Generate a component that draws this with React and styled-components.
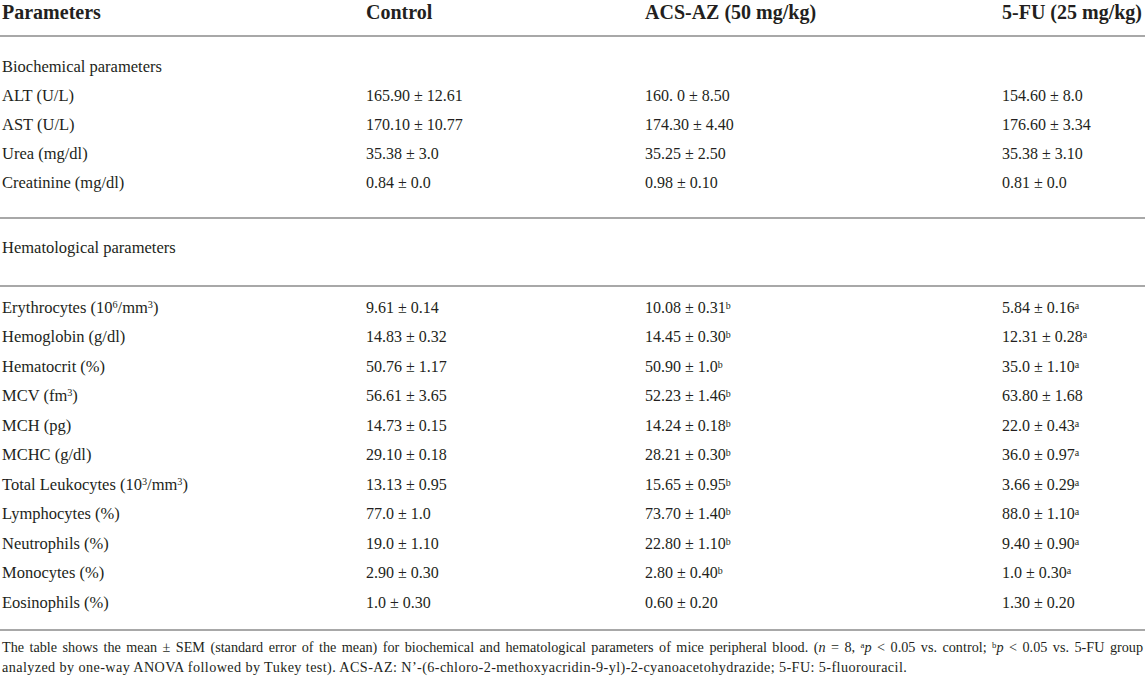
import React from "react";
import styled, { createGlobalStyle } from "styled-components";

const GlobalStyle = createGlobalStyle`
  html, body {
    margin: 0;
    padding: 0;
    background: #ffffff;
  }
  body {
    font-family: "Liberation Serif", "Times New Roman", serif;
    color: #231f20;
  }
`;

const Wrap = styled.div`
  width: 1145px;
  background: white;
`;

const Grid = styled.div`
  display: grid;
  grid-template-columns: 364px 279px 357px 1fr;
`;

const HeadRow = styled(Grid)`
  padding-bottom: 11px;
  border-bottom: 2px solid #a8a8a8;
`;

const HeadCell = styled.div`
  padding-left: 2px;
  font-size: 20px;
  font-weight: bold;
  line-height: 24px;
  white-space: nowrap;
`;

const Section = styled.div`
  padding-top: ${(p) => p.$top}px;
  padding-bottom: ${(p) => p.$bottom}px;
  border-bottom: ${(p) => (p.$line ? "2px solid #a8a8a8" : "none")};
`;

const Row = styled(Grid)`
  height: ${(p) => p.$h || 29}px;
  align-items: center;
`;

const Cell = styled.div`
  padding-left: 2px;
  font-size: ${(p) => (p.$label ? "16.5px" : "16px")};
  white-space: nowrap;
`;

const Label = styled.div`
  padding-left: 2px;
  font-size: 16.5px;
  height: 29px;
  line-height: 29px;
`;

const Sup = styled.sup`
  font-size: 0.62em;
  line-height: 0;
  vertical-align: 0.45em;
`;

const Note = styled.div`
  padding: 6px 2px 0;
  font-size: 14.2px;
  line-height: 20px;
`;

const NoteLine = styled.div`
  text-align: justify;
  text-align-last: ${(p) => (p.$last ? "left" : "justify")};
  letter-spacing: ${(p) => (p.$last ? "0.4px" : "0")};
  white-space: nowrap;
`;

const biochem = [
  ["ALT (U/L)", ["165.90 ± 12.61"], ["160. 0 ± 8.50"], ["154.60 ± 8.0"]],
  ["AST (U/L)", ["170.10 ± 10.77"], ["174.30 ± 4.40"], ["176.60 ± 3.34"]],
  ["Urea (mg/dl)", ["35.38 ± 3.0"], ["35.25 ± 2.50"], ["35.38 ± 3.10"]],
  ["Creatinine (mg/dl)", ["0.84 ± 0.0"], ["0.98 ± 0.10"], ["0.81 ± 0.0"]],
];

const hemato = [
  [<>Erythrocytes (10<Sup>6</Sup>/mm<Sup>3</Sup>)</>, ["9.61 ± 0.14"], ["10.08 ± 0.31", "b"], ["5.84 ± 0.16", "a"]],
  ["Hemoglobin (g/dl)", ["14.83 ± 0.32"], ["14.45 ± 0.30", "b"], ["12.31 ± 0.28", "a"]],
  ["Hematocrit (%)", ["50.76 ± 1.17"], ["50.90 ± 1.0", "b"], ["35.0 ± 1.10", "a"]],
  [<>MCV (fm<Sup>3</Sup>)</>, ["56.61 ± 3.65"], ["52.23 ± 1.46", "b"], ["63.80 ± 1.68"]],
  ["MCH (pg)", ["14.73 ± 0.15"], ["14.24 ± 0.18", "b"], ["22.0 ± 0.43", "a"]],
  ["MCHC (g/dl)", ["29.10 ± 0.18"], ["28.21 ± 0.30", "b"], ["36.0 ± 0.97", "a"]],
  [<>Total Leukocytes (10<Sup>3</Sup>/mm<Sup>3</Sup>)</>, ["13.13 ± 0.95"], ["15.65 ± 0.95", "b"], ["3.66 ± 0.29", "a"]],
  ["Lymphocytes (%)", ["77.0 ± 1.0"], ["73.70 ± 1.40", "b"], ["88.0 ± 1.10", "a"]],
  ["Neutrophils (%)", ["19.0 ± 1.10"], ["22.80 ± 1.10", "b"], ["9.40 ± 0.90", "a"]],
  ["Monocytes (%)", ["2.90 ± 0.30"], ["2.80 ± 0.40", "b"], ["1.0 ± 0.30", "a"]],
  ["Eosinophils (%)", ["1.0 ± 0.30"], ["0.60 ± 0.20"], ["1.30 ± 0.20"]],
];

const Value = ({ v }) => (
  <Cell>
    {v[0]}
    {v[1] && <Sup>{v[1]}</Sup>}
  </Cell>
);

const DataRow = ({ r, h }) => (
  <Row $h={h}>
    <Cell $label>{r[0]}</Cell>
    <Value v={r[1]} />
    <Value v={r[2]} />
    <Value v={r[3]} />
  </Row>
);

export default function App() {
  return (
    <Wrap>
      <GlobalStyle />
      <HeadRow>
        <HeadCell>Parameters</HeadCell>
        <HeadCell>Control</HeadCell>
        <HeadCell>ACS-AZ (50 mg/kg)</HeadCell>
        <HeadCell>5-FU (25 mg/kg)</HeadCell>
      </HeadRow>

      <Section $top={15} $bottom={20} $line>
        <Label>Biochemical parameters</Label>
        {biochem.map((r, i) => (
          <DataRow key={i} r={r} />
        ))}
      </Section>

      <Section $top={14} $bottom={23} $line>
        <Label>Hematological parameters</Label>
      </Section>

      <Section $top={6} $bottom={11} $line>
        {hemato.map((r, i) => (
          <DataRow key={i} r={r} h={29.5} />
        ))}
      </Section>

      <Note>
        <NoteLine>
          The table shows the mean ± SEM (standard error of the mean) for biochemical and
          hematological parameters of mice peripheral blood. (<i>n</i> = 8, <Sup>a</Sup>
          <i>p</i> &lt; 0.05 vs. control; <Sup>b</Sup>
          <i>p</i> &lt; 0.05 vs. 5-FU group
        </NoteLine>
        <NoteLine $last>
          analyzed by one-way ANOVA followed by Tukey test). ACS-AZ:
          N’-(6-chloro-2-methoxyacridin-9-yl)-2-cyanoacetohydrazide; 5-FU: 5-fluorouracil.
        </NoteLine>
      </Note>
    </Wrap>
  );
}
